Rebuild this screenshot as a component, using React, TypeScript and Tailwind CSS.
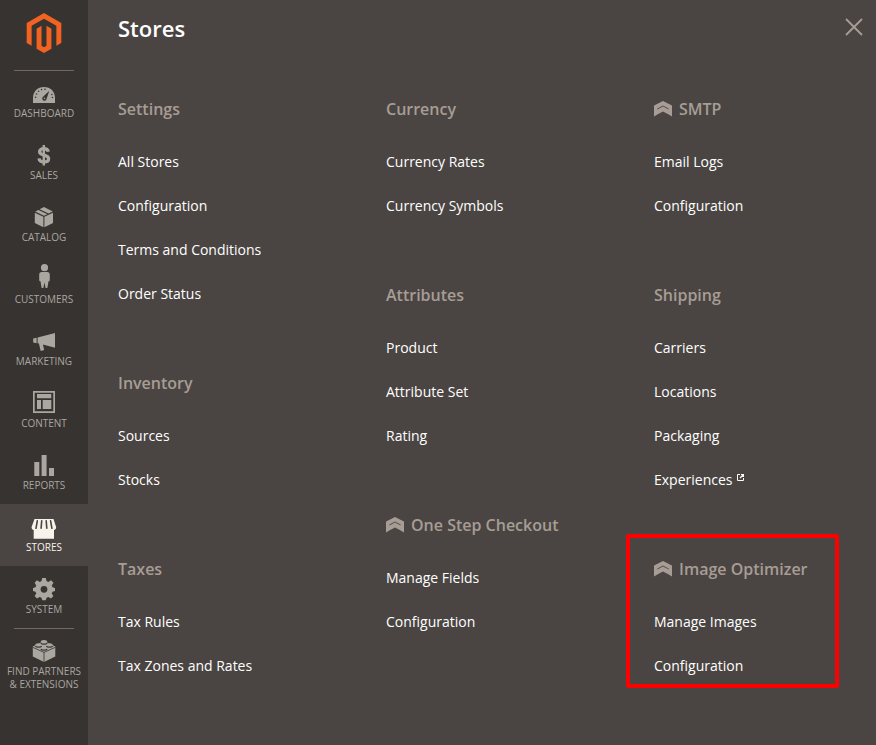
import type { JSX, ReactNode } from 'react';

type NavItem = {
  label: string;
  icon: ReactNode;
  active?: boolean;
  divided?: boolean;
};

type Group = {
  title: string;
  links: string[];
  vendor?: boolean;
  highlighted?: boolean;
};

const navItems: NavItem[] = [
  {
    label: 'Dashboard',
    divided: true,
    icon: (
      <>
        <path d="M3 26v-5C3 14.500 7.500 10 14 10s11 4.500 11 11v5z" fill="currentColor" />
        <g fill="#373330">
          <circle cx="5.600" cy="20.300" r=".8" />
          <circle cx="6.500" cy="17" r=".8" />
          <circle cx="8.600" cy="14.300" r=".8" />
          <circle cx="11.600" cy="12.600" r=".8" />
          <circle cx="15" cy="12.300" r=".8" />
          <circle cx="21.900" cy="17.500" r=".8" />
          <circle cx="22.400" cy="20.500" r=".8" />
          <path d="M19.300 13.700l-2.700 8a2.200 2.200 0 1 1-3.500-2z" />
        </g>
        <circle cx="14.500" cy="21.300" r=".8" fill="currentColor" />
      </>
    ),
  },
  {
    label: 'Sales',
    icon: (
      <g fill="none" stroke="currentColor">
        <path d="M18.300 12.700c-.4-2-2-3-4.500-3-2.600 0-4.200 1.200-4.200 3.100 0 4.500 9 2.200 9 6.900 0 2.200-1.900 3.200-4.700 3.200-2.800 0-4.600-1.100-4.900-3.500" strokeWidth="3.300" />
        <path d="M13.800 6v20.500" strokeWidth="2.400" />
      </g>
    ),
  },
  {
    label: 'Catalog',
    icon: (
      <g fill="currentColor">
        <path d="M4.800 11.800l8.600 4v10.400l-8.600-4.300z" />
        <path d="M14.400 15.800l8.600-4v10.100l-8.600 4.300z" />
        <path d="M5.200 10.600l3.300-1.700 8.900 4.300-3.400 1.600z" />
        <path d="M9.600 8.300L14 6.100l8.800 4.400-4.300 2.100z" />
      </g>
    ),
  },
  {
    label: 'Customers',
    icon: (
      <g fill="currentColor">
        <circle cx="14.500" cy="4.700" r="3.600" />
        <path d="M11.800 9h5.400c1.700 0 2.600 1.100 2.600 2.700V17c0 .8-.5 1.300-1.300 1.300-.3 2.300-.7 4.500-1.200 6.700h-1.700l-1.100-5.500-1.100 5.500h-1.700c-.5-2.200-.9-4.400-1.200-6.700-.8 0-1.300-.5-1.300-1.300v-5.300C9.200 10.100 10.100 9 11.800 9z" />
      </g>
    ),
  },
  {
    label: 'Marketing',
    icon: (
      <g fill="currentColor">
        <path d="M3.200 13.400l3.400-.7v5.500l-3.400-.7z" />
        <path d="M7.600 12.500L25 8v14.800l-12.100-3.300 1.300 5.600-3.500 1L8.900 18.600l-1.300-.3z" />
      </g>
    ),
  },
  {
    label: 'Content',
    icon: (
      <g fill="currentColor">
        <path fillRule="evenodd" d="M3 4h22v22H3zm1.700 1.700v18.600h18.600V5.700z" />
        <path d="M7 7h14.300v4.200H7zM7 13h4v9H7zM12.700 13h8.600v9h-8.600z" />
      </g>
    ),
  },
  {
    label: 'Reports',
    icon: <path d="M4.300 13h5v14h-5zM11.600 6h5v21h-5zM19 19h5v8h-5z" fill="currentColor" />,
  },
  {
    label: 'Stores',
    active: true,
    icon: (
      <>
        <path d="M4.500 8h19l2.600 8c.2 1.700-.8 2.800-2.100 3v8.700H3.700V19c-1.300-.2-2.300-1.300-2.100-3z" fill="currentColor" />
        <path d="M7.300 9.800L6 17.300M11.700 9.800l-.6 7.500M16.200 9.800l.6 7.500M20.600 9.800l1.300 7.500" stroke="#4a4542" strokeWidth="1.600" strokeLinecap="round" />
      </>
    ),
  },
  {
    label: 'System',
    icon: (
      <path
        fill="currentColor"
        fillRule="evenodd"
        d="M12.200 5h3.600l.7 3.100 1.800.8 2.700-1.700 2.500 2.500-1.700 2.700.7 1.900 2.500.7v3l-2.500.7-.8 1.900 1.700 2.500-2.400 2.500-2.600-1.700-1.900.8-.7 2.600h-3.600l-.7-2.600-1.900-.8-2.600 1.700-2.400-2.500 1.700-2.500-.8-1.900-2.500-.7v-3l2.500-.7.7-1.900-1.600-2.700L7 7.200l2.700 1.700 1.800-.8zM14 12.900a3.400 3.400 0 1 0 0 6.800 3.400 3.400 0 0 0 0-6.800z"
      />
    ),
  },
  {
    label: 'Find Partners & Extensions',
    divided: true,
    icon: (
      <>
        <path d="M2.800 11.500L14 6.300l11.300 5.200v10L14 27 2.800 21.500z" fill="currentColor" />
        <path d="M2.800 12.300L14 17.400l11.300-5.100M14 17.400V27" fill="none" stroke="#373330" strokeWidth=".8" />
        <g fill="currentColor">
          <ellipse cx="14" cy="7.500" rx="3.300" ry="2.400" />
          <ellipse cx="8.500" cy="10.300" rx="3.300" ry="2" />
          <ellipse cx="19.500" cy="10.300" rx="3.300" ry="2" />
          <ellipse cx="14" cy="13.200" rx="3.300" ry="2" />
        </g>
        <path
          d="M10.900 8c.8 1.600 5.400 1.600 6.200 0M5.400 11c.8 1.600 5.400 1.600 6.200 0M16.400 11c.8 1.600 5.400 1.600 6.200 0M10.900 14c.8 1.600 5.400 1.600 6.200 0"
          fill="none"
          stroke="#373330"
          strokeWidth="1.300"
        />
      </>
    ),
  },
];

const columns: Group[][] = [
  [
    { title: 'Settings', links: ['All Stores', 'Configuration', 'Terms and Conditions', 'Order Status'] },
    { title: 'Inventory', links: ['Sources', 'Stocks'] },
    { title: 'Taxes', links: ['Tax Rules', 'Tax Zones and Rates'] },
  ],
  [
    { title: 'Currency', links: ['Currency Rates', 'Currency Symbols'] },
    { title: 'Attributes', links: ['Product', 'Attribute Set', 'Rating'] },
    { title: 'One Step Checkout', vendor: true, links: ['Manage Fields', 'Configuration'] },
  ],
  [
    { title: 'SMTP', vendor: true, links: ['Email Logs', 'Configuration'] },
    { title: 'Shipping', links: ['Carriers', 'Locations', 'Packaging', 'Experiences'] },
    { title: 'Image Optimizer', vendor: true, highlighted: true, links: ['Manage Images', 'Configuration'] },
  ],
];

function Logo(): JSX.Element {
  return (
    <svg viewBox="0 0 24 24" className="size-10" fill="#f26322" aria-hidden="true">
      <path d="M12 24l-4.455-2.572v-12l2.970-1.715v12.001l1.485.902 1.485-.902V7.713l2.971 1.715v12zM22.391 6v12l-2.969 1.714V7.713L12 3.430 4.574 7.713v12.001L1.609 18V6L12 0z" />
    </svg>
  );
}

function VendorIcon(): JSX.Element {
  return (
    <svg viewBox="0 0 18 16" className="mr-[7px] h-4 w-[18px] shrink-0" fill="none" aria-hidden="true">
      <path d="M0 4.600L9 0l9 4.600V15.500l-4.200-2.500L9 10.500 4.200 13 0 15.500z" fill="currentColor" />
      <path d="M3.300 8L9 5l5.700 3" stroke="#4a4542" strokeWidth=".9" />
    </svg>
  );
}

function ExternalIcon(): JSX.Element {
  return (
    <svg viewBox="0 0 7 7" className="mb-1.5 ml-[5px] size-[7px]" fill="none" stroke="currentColor" aria-hidden="true">
      <path d="M3 .5H.5v6h6V4" />
      <path d="M4 .5h2.500V3M6.500.500L3 4" strokeWidth="1.200" />
    </svg>
  );
}

function MenuGroup({ group }: { group: Group }): JSX.Element {
  return (
    <section className="relative">
      {group.highlighted && (
        <div className="pointer-events-none absolute -top-6 bottom-0 -left-7 w-[213px] rounded-xs border-4 border-[#ff0000]" />
      )}
      <h3 className="mb-5 flex items-center text-base leading-[22px] font-semibold text-[#a79d95]">
        {group.vendor && <VendorIcon />}
        {group.title}
      </h3>
      <ul>
        {group.links.map((link) => (
          <li key={link}>
            <a href="#" className="flex h-11 items-center text-sm text-white hover:underline">
              {link}
              {link === 'Experiences' && <ExternalIcon />}
            </a>
          </li>
        ))}
      </ul>
    </section>
  );
}

export default function App(): JSX.Element {
  return (
    <div className="flex min-h-screen bg-[#4a4542] font-['Open_Sans',sans-serif]">
      {/* Sidebar */}
      <nav className="w-22 shrink-0 bg-[#373330]" aria-label="Main">
        <a href="#" className="flex h-[70px] justify-center pt-[13px]" aria-label="Home">
          <Logo />
        </a>
        <ul>
          {navItems.map((item) => (
            <li key={item.label}>
              {item.divided && <hr className="mx-[14px] -mb-px border-[#736963]" />}
              <a
                href="#"
                className={`flex min-h-[62px] flex-col items-center px-1 pt-[7px] text-center text-[10px] leading-[13px] uppercase ${
                  item.active ? 'bg-[#4a4542] text-[#f7f3eb]' : 'text-[#aaa6a0] hover:text-[#f7f3eb]'
                }`}
              >
                <svg viewBox="0 0 28 30" className="h-[30px] w-7 shrink-0" aria-hidden="true">
                  {item.icon}
                </svg>
                {item.label}
              </a>
            </li>
          ))}
        </ul>
      </nav>

      {/* Stores submenu */}
      <main className="grow pl-[30px]">
        <header className="flex h-[98px] items-start justify-between pt-[13px] pr-[13px]">
          <h2 className="text-[22px] leading-[30px] font-semibold text-white">Stores</h2>
          <button type="button" aria-label="Close" className="mt-[5px] text-[#a79d95] hover:text-white">
            <svg viewBox="0 0 18 18" className="size-[18px]" fill="none" stroke="currentColor" strokeWidth="1.800">
              <path d="M1 1l16 16M17 1L1 17" />
            </svg>
          </button>
        </header>
        <div className="grid grid-cols-3 gap-x-[46px]">
          {columns.map((groups) => (
            <div key={groups[0].title} className="flex flex-col gap-14">
              {groups.map((group) => (
                <MenuGroup key={group.title} group={group} />
              ))}
            </div>
          ))}
        </div>
      </main>
    </div>
  );
}
